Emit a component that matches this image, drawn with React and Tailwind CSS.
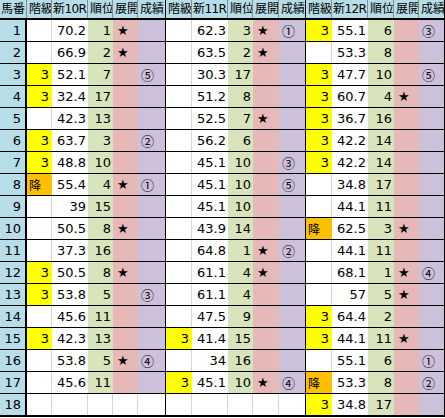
import React from "react";

const GRID =
  "grid grid-cols-[27px_25px_36px_25px_25px_28px_26px_36px_25px_26px_27px_26px_36px_26px_25px_26px]";

const rows = [
  [["", "70.2", "1", "★", ""], ["", "62.3", "3", "★", "①"], ["3", "55.1", "6", "", "③"]],
  [["", "66.9", "2", "★", ""], ["", "63.5", "2", "★", ""], ["", "53.3", "8", "", ""]],
  [["3", "52.1", "7", "", "⑤"], ["", "30.3", "17", "", ""], ["3", "47.7", "10", "", "⑤"]],
  [["3", "32.4", "17", "", ""], ["", "51.2", "8", "", ""], ["3", "60.7", "4", "★", ""]],
  [["", "42.3", "13", "", ""], ["", "52.5", "7", "★", ""], ["3", "36.7", "16", "", ""]],
  [["3", "63.7", "3", "", "②"], ["", "56.2", "6", "", ""], ["3", "42.2", "14", "", ""]],
  [["3", "48.8", "10", "", ""], ["", "45.1", "10", "", "③"], ["3", "42.2", "14", "", ""]],
  [["降", "55.4", "4", "★", "①"], ["", "45.1", "10", "", "⑤"], ["", "34.8", "17", "", ""]],
  [["", "39", "15", "", ""], ["", "45.1", "10", "", ""], ["", "44.1", "11", "", ""]],
  [["", "50.5", "8", "★", ""], ["", "43.9", "14", "", ""], ["降", "62.5", "3", "★", ""]],
  [["", "37.3", "16", "", ""], ["", "64.8", "1", "★", "②"], ["", "44.1", "11", "", ""]],
  [["3", "50.5", "8", "★", ""], ["", "61.1", "4", "★", ""], ["", "68.1", "1", "★", "④"]],
  [["3", "53.8", "5", "", "③"], ["", "61.1", "4", "", ""], ["", "57", "5", "★", ""]],
  [["", "45.6", "11", "", ""], ["", "47.5", "9", "", ""], ["3", "64.4", "2", "", ""]],
  [["3", "42.3", "13", "", ""], ["3", "41.4", "15", "", ""], ["3", "44.1", "11", "★", ""]],
  [["", "53.8", "5", "★", "④"], ["", "34", "16", "", ""], ["", "55.1", "6", "", "①"]],
  [["", "45.6", "11", "", ""], ["3", "45.1", "10", "★", "④"], ["降", "53.3", "8", "", "②"]],
  [null, null, ["3", "34.8", "17", "", ""]],
];

const headers = [
  ["階級", "新10R", "順位", "展開", "成績"],
  ["階級", "新11R", "順位", "展開", "成績"],
  ["階級", "新12R", "順位", "展開", "成績"],
];

function Group({ d }) {
  if (!d) {
    return (
      <>
        <div className="border-r border-[#d4d4d4]" />
        <div className="border-r border-[#d4d4d4]" />
        <div className="border-r border-[#d4d4d4]" />
        <div className="border-r border-[#d4d4d4]" />
        <div className="border-r border-black" />
      </>
    );
  }
  const [cls, val, rank, ten, res] = d;
  let clsCell;
  if (cls === "3") {
    clsCell = <div className="bg-[#ffff00] text-right pr-[3px] overflow-hidden">3</div>;
  } else if (cls === "降") {
    clsCell = (
      <div className="bg-[#ffc000] text-left pl-[2px] overflow-hidden font-['Noto_Sans_CJK_JP'] text-[12px]">
        降
      </div>
    );
  } else {
    clsCell = <div className="border-r border-[#d4d4d4]" />;
  }
  return (
    <>
      {clsCell}
      <div className="bg-white text-right pr-[2px] overflow-hidden">{val}</div>
      <div className="bg-[#d8e4bc] text-right pr-[2px] overflow-hidden">{rank}</div>
      <div className="bg-[#e6b8b7] text-left pl-[4px] overflow-hidden">{ten}</div>
      <div className="bg-[#ccc0da] border-r border-black text-left pl-[3px] overflow-hidden font-['Noto_Sans_CJK_JP'] text-[13px]">
        {res}
      </div>
    </>
  );
}

export default function App() {
  return (
    <div
      className="w-[445px] h-[418px] bg-white text-black overflow-hidden"
      style={{ fontFamily: '"DejaVu Sans", "Noto Sans CJK JP", sans-serif' }}
    >
      <div className={`${GRID} h-[20px] bg-[#b7dee8] border-b-2 border-black text-[12px] leading-[18px]`}>
        <div className="pl-[1px] border-r border-[#8a8a8a] overflow-hidden whitespace-nowrap">馬番</div>
        {headers.map((g, gi) =>
          g.map((h, i) => (
            <div
              key={`${gi}-${i}`}
              className={`overflow-hidden whitespace-nowrap border-r ${
                i === 1 ? "pl-[1px] tracking-[-0.6px]" : "pl-[2px]"
              } ${i === 4 ? "border-black" : "border-[#8a8a8a]"}`}
            >
              {h}
            </div>
          ))
        )}
      </div>
      {rows.map((r, ri) => (
        <div
          key={ri}
          className={`${GRID} text-[13px] ${
            ri === rows.length - 1
              ? "h-[23px] border-b-2 leading-[21px]"
              : "h-[22px] border-b leading-[21px]"
          } border-black`}
        >
          <div className="bg-[#b7dee8] border-r-2 border-black text-right pr-[4px]">{ri + 1}</div>
          <Group d={r[0]} />
          <Group d={r[1]} />
          <Group d={r[2]} />
        </div>
      ))}
    </div>
  );
}
